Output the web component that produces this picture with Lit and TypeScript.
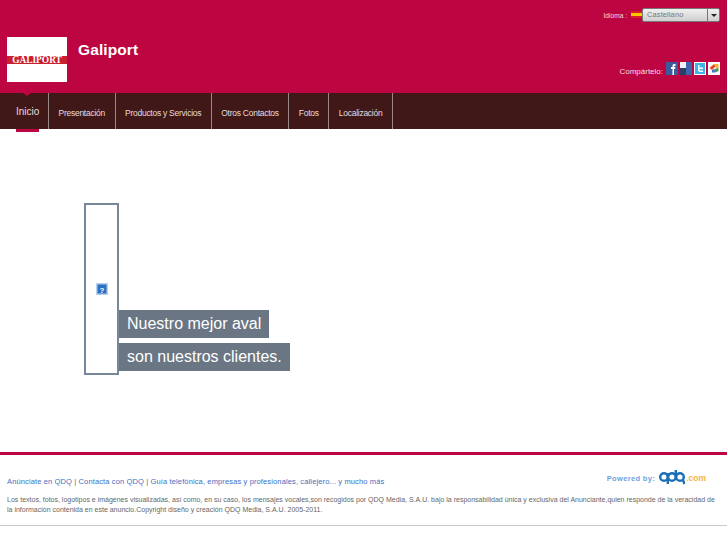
import { LitElement, html, css } from "lit";
import { customElement } from "lit/decorators.js";

@customElement("app-root")
export class AppRoot extends LitElement {
  static styles = css`
    :host { display: block; width: 727px; height: 545px; background: #fff; font-family: "Liberation Sans", Arial, sans-serif; overflow: hidden; }
    .header { height: 93px; background: #bd0541; box-sizing: border-box; display: flex; justify-content: space-between; color: #fff; }
    .brand { display: flex; align-items: flex-start; padding: 37px 0 0 7px; gap: 11px; }
    .logo { width: 60px; height: 45px; background: #fff; display: flex; align-items: center; }
    .logo span { display: block; width: 100%; height: 8px; margin-top: 1px; background: #c9202f; color: #fff; font: bold 9.4px/8px "Liberation Serif", serif; text-align: center; white-space: nowrap; }
    .title { font-size: 15.5px; font-weight: bold; line-height: 18px; padding-top: 4px; letter-spacing: 0.1px; }
    .tools { display: flex; flex-direction: column; align-items: flex-end; padding: 8px 7px 0 0; }
    .lang { display: flex; align-items: center; font-size: 6.6px; color: #f4d9e2; height: 14px; }
    .flag { width: 11px; height: 7px; margin: 0 0 1px 4px; background: linear-gradient(#d8202a 25%, #fbc800 25%, #fbc800 75%, #d8202a 75%); }
    .select { width: 78px; height: 14px; border: 1px solid #777; border-radius: 2px; box-sizing: border-box; background: linear-gradient(#f0f0f0, #cfcfcf); display: flex; color: #777; font-size: 7.5px; line-height: 12px; letter-spacing: 0.1px; }
    .select .v { flex: 1; padding-left: 4px; }
    .select .b { width: 11px; border-left: 1px solid #777; display: flex; align-items: center; justify-content: center; }
    .arrow { width: 0; height: 0; border: 3px solid transparent; border-top: 3px solid #222; border-bottom: 0; }
    .share { display: flex; align-items: flex-start; margin-top: 40px; font-size: 8px; color: #f7dbe5; gap: 2px; }
    .share svg { display: block; }
    .share .lbl { margin-right: 1px; line-height: 9px; margin-top: 5px; }
    .nav { height: 36px; background: #401818; display: flex; color: #e6dcdc; font-size: 8.5px; letter-spacing: -0.26px; }
    .nav a { display: flex; align-items: center; padding: 3px 9.5px 0; border-right: 1px solid #9a8888; position: relative; white-space: nowrap; }
    .nav a.on { font-size: 10px; letter-spacing: 0; padding: 1px 8px 0 16px; width: 24px; box-sizing: content-box; }
    .nav a.on::after { content: ""; position: absolute; left: 16px; bottom: -3px; width: 23px; height: 3px; background: #bd0541; }
    .nav a.on::before { content: ""; position: absolute; left: 23px; top: 0; border: 4px solid transparent; border-top: 3px solid #bd0541; border-bottom: 0; }
    .main { height: 323px; box-sizing: border-box; padding: 74px 0 0 84px; display: flex; align-items: flex-start; }
    .broken { width: 35px; height: 172px; box-sizing: border-box; border: 2px solid #77879a; display: flex; align-items: center; justify-content: center; padding-bottom: 1px; }
    .broken svg { display: block; margin-left: 1px; }
    .claims { height: 172px; display: flex; flex-direction: column; align-items: flex-start; justify-content: flex-end; gap: 5px; padding-bottom: 4px; box-sizing: border-box; }
    .claims span { display: block; background: #6a7683; color: #fff; font-size: 16px; height: 28px; line-height: 28px; padding: 0 8px; white-space: nowrap; }
    .foot { border-top: 3px solid #bd0541; height: 70px; box-sizing: content-box; border-bottom: 1px solid #cfc8c4; padding: 0 7px; }
    .top { display: flex; justify-content: space-between; align-items: center; height: 40px; padding-top: 6px; box-sizing: border-box; }
    .links { font-size: 7.5px; color: #3d6fc4; letter-spacing: 0.13px; padding-top: 7px; }
    .links i { font-style: normal; color: #666; }
    .pw { display: flex; align-items: center; gap: 4px; padding-right: 14px; color: #6ea2e0; font-size: 7.5px; font-weight: bold; letter-spacing: 0.35px; }
    .pw svg { display: block; }
    .pw b { color: #f4b63a; font-size: 8.5px; margin-left: -3px; letter-spacing: 0; }
    .legal { font-size: 7px; line-height: 10px; color: #666; margin: 0; white-space: nowrap; }
  `;

  render() {
    return html`
      <div class="header">
        <div class="brand">
          <div class="logo"><span>GALIPORT</span></div>
          <div class="title">Galiport</div>
        </div>
        <div class="tools">
          <div class="lang">Idioma :<span class="flag"></span>
            <div class="select"><span class="v">Castellano</span><span class="b"><span class="arrow"></span></span></div>
          </div>
          <div class="share">
            <span class="lbl">Compártelo:</span>
            <svg width="12" height="13" viewBox="0 0 12 13"><rect width="12" height="13" fill="#3b5c9a"/><path d="M6.500 13V7H5V5h1.500V3.500Q6.500 2 8 2h1.500v2H8.500Q8 4 8 4.500V5h1.500L9 7H8v6z" fill="#fff"/></svg>
            <svg width="12" height="13" viewBox="0 0 12 13"><rect x="0" y="0" width="6" height="6" fill="#f2f2f4"/><rect x="6" y="0" width="6" height="6" fill="#3f65ad"/><rect x="0" y="6" width="6" height="7" fill="#2b3f66"/><rect x="6" y="6" width="6" height="7" fill="#3f65ad"/></svg>
            <svg width="12" height="13" viewBox="0 0 12 13"><rect width="12" height="13" fill="#fff"/><rect x="1" y="1" width="10" height="11" fill="#3fb4e6"/><path d="M4 3v4.500Q4 10 6.500 10H9V8.500H6.500Q5.500 8.500 5.500 7.500V7H9V5.500H5.500V3z" fill="#fff"/></svg>
            <svg width="12" height="13" viewBox="0 0 12 13"><rect width="12" height="13" fill="#fff"/><path d="M1.500 6 6 2l1.500 2.500L4 8z" fill="#e2492f"/><path d="M6 2h4.500v4H8z" fill="#f2b632"/><path d="M10.500 6v3L7 10.500 6.500 7z" fill="#3f9c4a"/><path d="M4 8l2.500-1 .5 3.500H4z" fill="#3f6fd1"/></svg>
          </div>
        </div>
      </div>
      <div class="nav">
        <a class="on">Inicio</a>
        <a>Presentación</a>
        <a>Productos y Servicios</a>
        <a>Otros Contactos</a>
        <a>Fotos</a>
        <a>Localización</a>
      </div>
      <div class="main">
        <div class="broken">
          <svg width="12" height="12" viewBox="0 0 12 12"><rect width="12" height="12" fill="#b9cff0"/><rect x="1.500" y="1.500" width="9" height="9" fill="#2a6fc0"/><text x="6" y="9.500" text-anchor="middle" font-size="8" font-weight="bold" fill="#fff" font-family="Liberation Sans">?</text></svg>
        </div>
        <div class="claims">
          <span>Nuestro mejor aval</span>
          <span>son nuestros clientes.</span>
        </div>
      </div>
      <div class="foot">
        <div class="top">
          <div class="links">Anúnciate en QDQ <i>|</i> Contacta con QDQ <i>|</i> Guía telefónica, empresas y profesionales, callejero... y mucho más</div>
          <div class="pw">Powered by:
            <svg width="26" height="16" viewBox="0 0 26 16" fill="none" stroke="#1a6fb8" stroke-width="2.400"><circle cx="5" cy="7" r="3.800"/><circle cx="13" cy="7" r="3.800"/><circle cx="21" cy="7" r="3.800"/><path d="M8.800 3v11M16.800 0v10M24 10l1.500 4"/></svg>
            <b>.com</b>
          </div>
        </div>
        <p class="legal">Los textos, fotos, logotipos e imágenes visualizadas, así como, en su caso, los mensajes vocales,son recogidos por QDQ Media, S.A.U. bajo la responsabilidad única y exclusiva del Anunciante,quien responde de la veracidad de<br>la información contenida en este anuncio.Copyright diseño y creación QDQ Media, S.A.U. 2005-2011.</p>
      </div>
    `;
  }
}
